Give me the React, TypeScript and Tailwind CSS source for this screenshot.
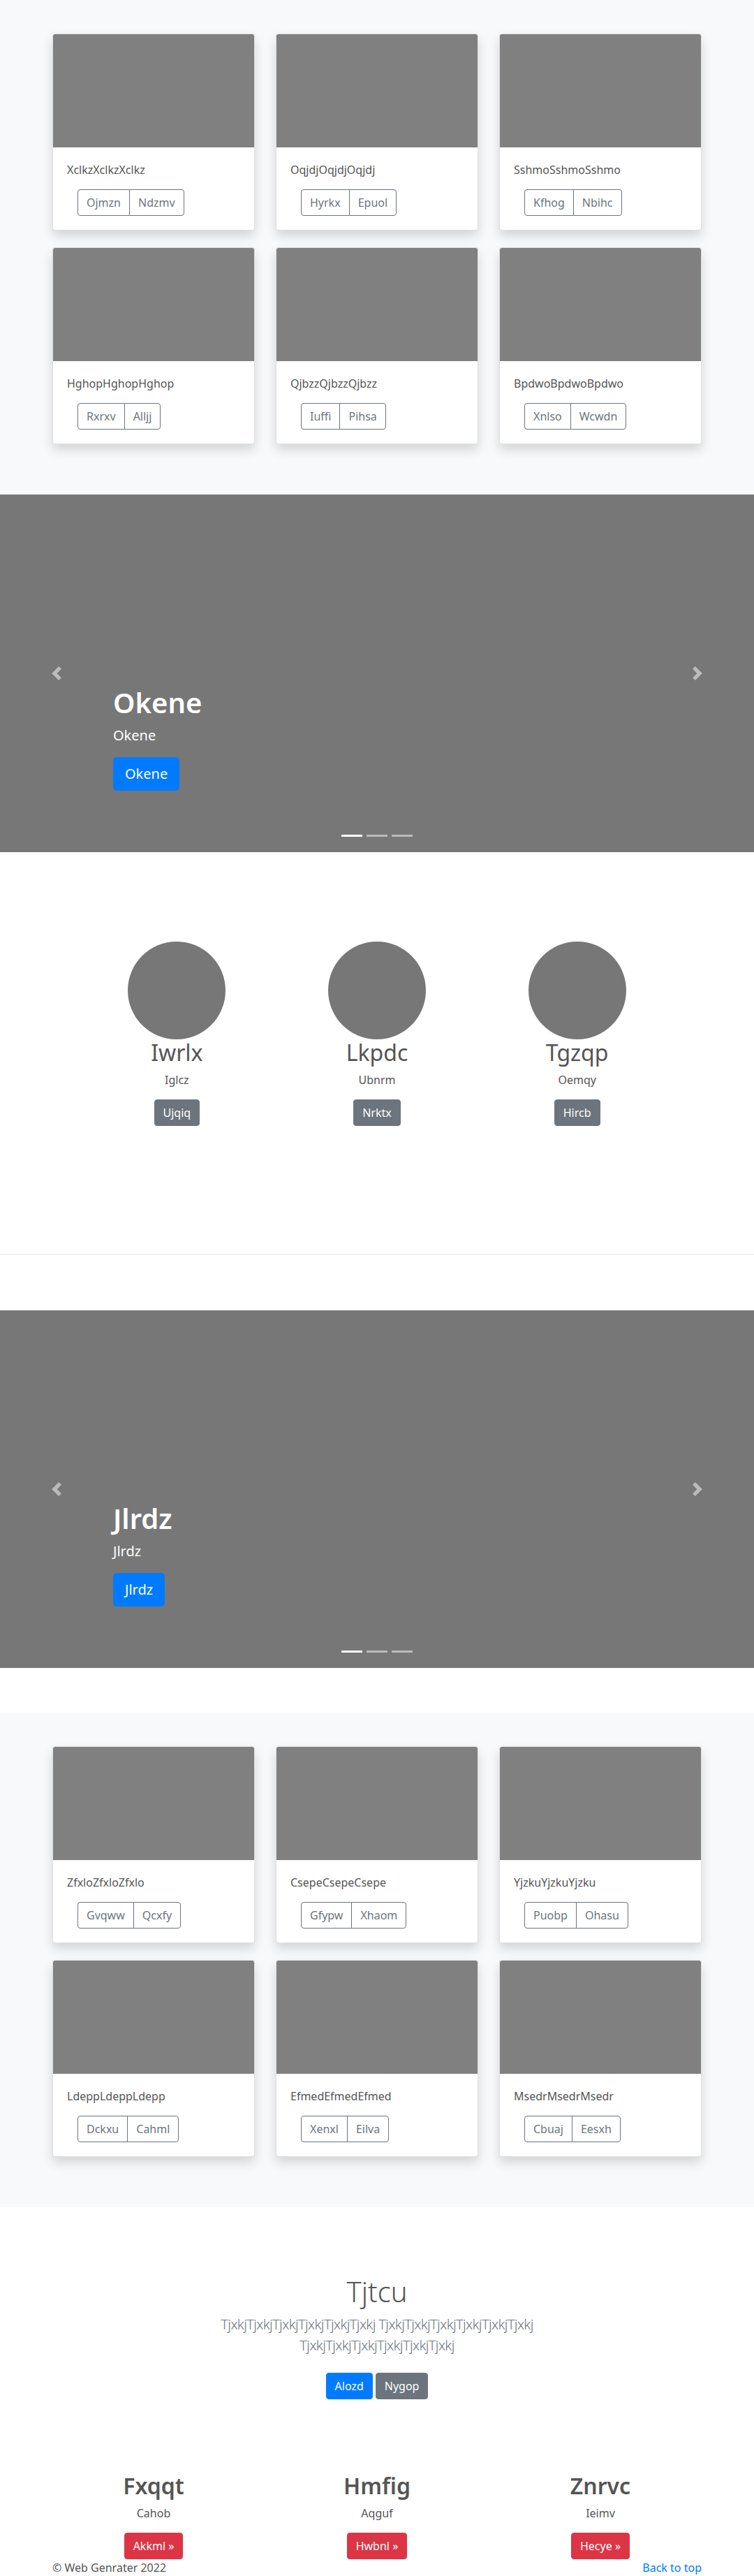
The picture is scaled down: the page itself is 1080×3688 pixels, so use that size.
import React from 'react';

type CardData = [string, string, string];

const album1: CardData[] = [
  ['XclkzXclkzXclkz', 'Ojmzn', 'Ndzmv'],
  ['OqjdjOqjdjOqjdj', 'Hyrkx', 'Epuol'],
  ['SshmoSshmoSshmo', 'Kfhog', 'Nbihc'],
  ['HghopHghopHghop', 'Rxrxv', 'Alljj'],
  ['QjbzzQjbzzQjbzz', 'Iuffi', 'Pihsa'],
  ['BpdwoBpdwoBpdwo', 'Xnlso', 'Wcwdn'],
];

const album2: CardData[] = [
  ['ZfxloZfxloZfxlo', 'Gvqww', 'Qcxfy'],
  ['CsepeCsepeCsepe', 'Gfypw', 'Xhaom'],
  ['YjzkuYjzkuYjzku', 'Puobp', 'Ohasu'],
  ['LdeppLdeppLdepp', 'Dckxu', 'Cahml'],
  ['EfmedEfmedEfmed', 'Xenxl', 'Eilva'],
  ['MsedrMsedrMsedr', 'Cbuaj', 'Eesxh'],
];

function Card({ data }: { data: CardData }) {
  const [title, a, b] = data;
  return (
    <div className="bg-white border border-black/[0.125] rounded-[4px] shadow-[0_8px_16px_rgba(0,0,0,0.15)] overflow-hidden">
      <div className="h-[162px] bg-[#808080]" />
      <div className="p-5">
        <p className="text-base leading-6 mb-4 text-[#555]">{title}</p>
        <div className="ml-[15px] flex">
          <button className="px-3 py-[6px] text-base leading-6 border border-[#6c757d] text-[#6c757d] bg-transparent rounded-l-[4px]">
            {a}
          </button>
          <button className="-ml-px px-3 py-[6px] text-base leading-6 border border-[#6c757d] text-[#6c757d] bg-transparent rounded-r-[4px]">
            {b}
          </button>
        </div>
      </div>
    </div>
  );
}

function Album({ cards }: { cards: CardData[] }) {
  return (
    <section className="bg-[#f8f9fa] pt-12 pb-[72px]">
      <div className="w-[930px] mx-auto grid grid-cols-3 gap-x-[30px] gap-y-6">
        {cards.map((c) => (
          <Card key={c[0]} data={c} />
        ))}
      </div>
    </section>
  );
}

function Carousel({ label }: { label: string }) {
  return (
    <div className="relative h-[512px] bg-[#777] overflow-hidden">
      <div className="h-full flex flex-col justify-end px-[162px] pb-[88px]">
        <h1 className="text-[40px] leading-[48px] font-semibold text-white mb-2">{label}</h1>
        <p className="text-[20px] leading-[30px] text-white mb-4">{label}</p>
        <div>
          <a className="inline-block bg-[#007bff] border border-[#007bff] text-white text-[20px] leading-[30px] px-4 py-2 rounded-[5px]">
            {label}
          </a>
        </div>
      </div>
      <div className="absolute left-0 top-0 bottom-0 w-[15%] flex items-center justify-center opacity-50">
        <svg width="20" height="20" viewBox="0 0 8 8" fill="#fff">
          <path d="M5.25 0l-4 4 4 4 1.5-1.5L4.25 4l2.5-2.5L5.25 0z" />
        </svg>
      </div>
      <div className="absolute right-0 top-0 bottom-0 w-[15%] flex items-center justify-center opacity-50">
        <svg width="20" height="20" viewBox="0 0 8 8" fill="#fff">
          <path d="M2.75 0l-1.5 1.5L3.75 4l-2.5 2.5L2.75 8l4-4-4-4z" />
        </svg>
      </div>
      <div className="absolute left-0 right-0 bottom-[22px] flex justify-center gap-[6px]">
        <span className="block w-[30px] h-[3px] bg-white" />
        <span className="block w-[30px] h-[3px] bg-white/50" />
        <span className="block w-[30px] h-[3px] bg-white/50" />
      </div>
    </div>
  );
}

const circles = [
  ['Iwrlx', 'Iglcz', 'Ujqiq'],
  ['Lkpdc', 'Ubnrm', 'Nrktx'],
  ['Tgzqp', 'Oemqy', 'Hircb'],
];

const bottom = [
  ['Fxqqt', 'Cahob', 'Akkml'],
  ['Hmfig', 'Aqguf', 'Hwbnl'],
  ['Znrvc', 'Ieimv', 'Hecye'],
];

export default function App() {
  return (
    <div className="font-['Noto_Sans','Open_Sans',sans-serif] text-[#555] bg-white w-[1080px]">
      <Album cards={album1} />
      <Carousel label="Okene" />

      <section className="pt-[128px] pb-[183px]">
        <div className="w-[860px] mx-auto grid grid-cols-3 text-center">
          {circles.map(([h, p, b]) => (
            <div key={h} className="flex flex-col items-center">
              <div className="w-[140px] h-[140px] rounded-full bg-[#777]" />
              <h2 className="text-[32px] leading-[38px] font-normal text-[#555] mb-2">{h}</h2>
              <p className="text-base leading-6 mb-4 text-[#555]">{p}</p>
              <a className="inline-block bg-[#6c757d] border border-[#6c757d] text-white text-base leading-6 px-3 py-[6px] rounded-[4px]">
                {b}
              </a>
            </div>
          ))}
        </div>
      </section>

      <hr className="border-0 border-t border-black/10 m-0" />

      <div className="mt-20 mb-16">
        <Carousel label="Jlrdz" />
      </div>

      <Album cards={album2} />

      <section className="pt-[97px] pb-12 text-center">
        <div className="max-w-[640px] mx-auto px-[15px]">
          <h1 className="text-[40px] leading-[48px] font-light text-[#555] mb-2">Tjtcu</h1>
          <p className="text-[20px] leading-[30px] font-light tracking-[-0.6px] text-[#6c757d] mb-4">
            TjxkjTjxkjTjxkjTjxkjTjxkjTjxkj TjxkjTjxkjTjxkjTjxkjTjxkjTjxkj TjxkjTjxkjTjxkjTjxkjTjxkjTjxkj
          </p>
          <div className="flex justify-center gap-1 py-2">
            <a className="inline-block bg-[#007bff] border border-[#007bff] text-white text-base leading-6 px-3 py-[6px] rounded-[4px]">
              Alozd
            </a>
            <a className="inline-block bg-[#6c757d] border border-[#6c757d] text-white text-base leading-6 px-3 py-[6px] rounded-[4px]">
              Nygop
            </a>
          </div>
        </div>
      </section>

      <section className="pt-[49px]">
        <div className="w-[960px] mx-auto grid grid-cols-3 text-center">
          {bottom.map(([h, p, b]) => (
            <div key={h} className="px-[15px] flex flex-col items-center">
              <h2 className="text-[32px] leading-[38px] font-semibold text-[#555] mb-2">{h}</h2>
              <p className="text-base leading-6 mb-4 text-[#555]">{p}</p>
              <a className="inline-block bg-[#dc3545] border border-[#dc3545] text-white text-base leading-6 px-3 py-[6px] rounded-[4px]">
                {b} »
              </a>
            </div>
          ))}
        </div>
      </section>

      <footer className="w-[930px] mx-auto flex justify-between text-base leading-6">
        <p className="text-[#555]">© Web Genrater 2022</p>
        <a className="text-[#007bff]">Back to top</a>
      </footer>
    </div>
  );
}
